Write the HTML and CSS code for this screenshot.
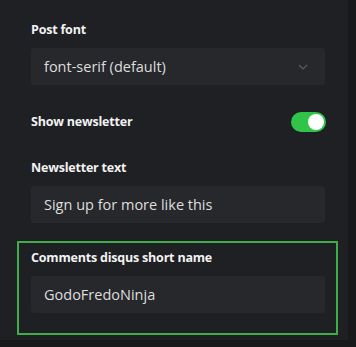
FILE: index.html
```html
<!DOCTYPE html>
<html>
<head>
    <meta name="viewport" content="width=device-width, initial-scale=1.0">
    <link rel="stylesheet" href="styles.css">
</head>
<body>
    <div class="panel">
        <div class="field">
            <label class="fieldLabel">Post font</label>
            <div class="select">
                <span>font-serif (default)</span>
                <svg class="chevron" width="10" height="6" viewBox="0 0 10 6">
                    <path d="M1 1 L5 5 L9 1" fill="none" stroke="#55575c" stroke-width="1.4"/>
                </svg>
            </div>
        </div>
        <div class="field">
            <div class="toggleRow">
                <label class="fieldLabel">Show newsletter</label>
                <div class="toggle on"><div class="knob"></div></div>
            </div>
        </div>
        <div class="field">
            <label class="fieldLabel">Newsletter text</label>
            <div class="input">Sign up for more like this</div>
        </div>
        <div class="field active">
            <label class="fieldLabel">Comments disqus short name</label>
            <div class="input">GodoFredoNinja</div>
        </div>
    </div>
</body>
</html>
```

FILE: styles.css
```css
body {
    margin: 0;
    background: #18191b;
    font-family: 'Open Sans', 'Noto Sans', sans-serif;
    width: 356px;
    height: 347px;
    overflow: hidden;
}

.panel {
    width: 348px;
    height: 340px;
    background: #1f2023;
    box-sizing: border-box;
    padding: 13px 0 0 17px;
    display: flex;
    flex-direction: column;
    gap: 10px;
}

.field {
    width: 321px;
    box-sizing: border-box;
    border: 2px solid transparent;
    padding: 6px 11px 6px 12px;
}

.field.active {
    border-color: #3fae48;
    padding-bottom: 20px;
}

.fieldLabel {
    display: block;
    color: #f2f2f2;
    font-size: 12.5px;
    font-weight: 700;
    line-height: 18px;
    letter-spacing: -0.2px;
}

.select, .input {
    margin-top: 9px;
    height: 37px;
    background: #27282c;
    border-radius: 3px;
    color: #dedede;
    font-size: 14.5px;
    display: flex;
    align-items: center;
    padding: 0 13px;
    box-sizing: border-box;
}

.select {
    justify-content: space-between;
}

.chevron {
    margin-right: 4px;
}

.toggleRow {
    display: flex;
    align-items: center;
    justify-content: space-between;
    height: 22px;
}

.toggle {
    width: 35px;
    height: 20px;
    border-radius: 10px;
    background: #30c449;
    position: relative;
    margin-right: -1px;
}

.knob {
    position: absolute;
    top: 2px;
    right: 2px;
    width: 16px;
    height: 16px;
    border-radius: 50%;
    background: #fff;
}
```
